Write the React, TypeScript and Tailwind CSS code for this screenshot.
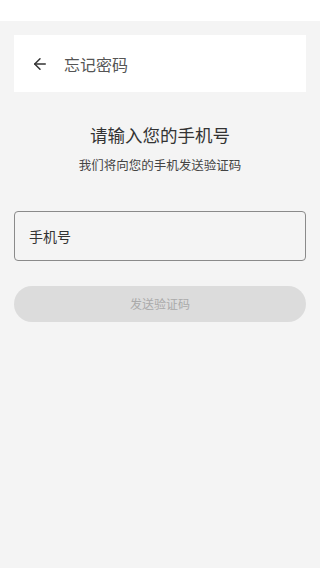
import { ArrowLeft } from "lucide-react";

const font = { fontFamily: '"Noto Sans CJK SC", "Noto Sans", sans-serif' };

export default function App() {
  return (
    <div className="flex min-h-[568px] w-[320px] flex-col bg-[#f4f4f4]" style={font}>
      <div className="h-[21px] bg-white" />
      <div className="px-[14px] pt-[14px]">
        <div className="flex h-[57px] items-center bg-white pl-[17px]">
          <ArrowLeft className="h-[18px] w-[18px] text-[#333]" strokeWidth={2} />
          <span className="ml-[15px] text-[16px] text-[#555]">忘记密码</span>
        </div>
      </div>
      <div className="mt-[31px] flex flex-col items-center">
        <h1 className="text-[17.5px] leading-[24px] text-[#333]">请输入您的手机号</h1>
        <p className="mt-[9px] text-[12.5px] leading-[18px] text-[#444]">我们将向您的手机发送验证码</p>
      </div>
      <div className="mt-[37px] px-[14px]">
        <div className="flex h-[50px] items-center rounded-[4px] border border-[#8a8a8a] px-[14px]">
          <span className="text-[14px] text-[#333]">手机号</span>
        </div>
        <button className="mt-[25px] flex h-[36px] w-full items-center justify-center rounded-full bg-[#dcdcdc] text-[12px] text-[#aaa]">
          发送验证码
        </button>
      </div>
    </div>
  );
}
